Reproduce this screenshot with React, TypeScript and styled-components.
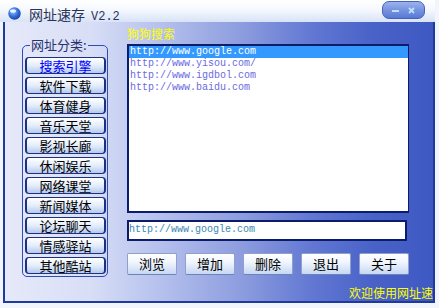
import React from 'react';
import styled, { createGlobalStyle } from 'styled-components';

const Global = createGlobalStyle`
  html, body { margin: 0; padding: 0; background: #f3f5fc; }
  body { width: 439px; height: 308px; overflow: hidden; font-family: "Noto Sans CJK SC", sans-serif; }
  * { box-sizing: border-box; }
`;

const Window = styled.div`
  width: 439px;
  height: 308px;
  display: flex;
  flex-direction: column;
  background: #f3f5fc;
`;

const TitleBar = styled.div`
  width: 435px;
  height: 22px;
  flex: none;
  display: flex;
  align-items: flex-start;
  padding-left: 8px;
  background: linear-gradient(180deg, #ffffff 0%, #f5f8fe 45%, #d8e3f6 100%);
`;

const Globe = styled.svg`
  margin-top: 7px;
  flex: none;
`;

const Title = styled.div`
  margin-top: 6px;
  margin-left: 8px;
  height: 16px;
  line-height: 16px;
  font-size: 14px;
  color: #2a3358;
  white-space: nowrap;
`;

const Version = styled.span`
  font-family: "Liberation Mono", monospace;
  font-size: 12px;
  margin-left: 6px;
`;

const WinButtons = styled.div`
  margin-left: auto;
  margin-right: 10px;
  margin-top: 1px;
  width: 43px;
  height: 18px;
  border: 1px solid #4362bd;
  border-radius: 7px;
  background: linear-gradient(180deg, #9bb3ec 0%, #7b96e0 45%, #5a78d4 100%);
  display: flex;
  align-items: center;
  justify-content: space-around;
  padding: 0 4px;
`;

const Body = styled.div`
  width: 432px;
  height: 281px;
  margin-left: 3px;
  flex: none;
  border-left: 2px solid #1d3a9c;
  border-right: 2px solid #1d3a9c;
  border-bottom: 2px solid #1d3a9c;
  background: linear-gradient(90deg, #e6e9f9 0%, #d8def6 20%, #b6c1ed 36%, #8b9bde 56%, #6177d2 72%, #4862c8 86%, #3f59c3 100%);
  display: flex;
  overflow: hidden;
  padding-left: 17px;
`;

const Group = styled.fieldset`
  margin: 14px 0 0 0;
  width: 86px;
  height: 241px;
  padding: 3px 1px 2px 2px;
  border: 1px solid #2c4cb8;
  border-radius: 5px;
  min-inline-size: 0;
  display: flex;
  flex-direction: column;
  gap: 3px;
  flex: none;
`;

const Legend = styled.legend`
  margin-left: 5px;
  padding: 0 1px;
  font-size: 13px;
  line-height: 18px;
  color: #26316e;
`;

const CatButton = styled.button<{ $active?: boolean }>`
  width: 81px;
  height: 17px;
  flex: none;
  padding: 0;
  border: 1px solid #1c3280;
  border-left-width: 2px;
  border-right-width: 2px;
  border-radius: 4px;
  background: linear-gradient(180deg, #ffffff 0%, #e4edfa 50%, #b6caee 100%);
  font-family: "Noto Sans CJK SC", sans-serif;
  font-size: 13px;
  line-height: 14px;
  color: ${p => (p.$active ? '#0000ff' : '#000000')};
  box-shadow: inset 0 1px 0 #ffffff;
`;

const Right = styled.div`
  margin-left: 19px;
  width: 282px;
  flex: none;
  padding-top: 5px;
  display: flex;
  flex-direction: column;
`;

const Caption = styled.div`
  height: 14px;
  line-height: 14px;
  font-size: 12px;
  color: #ffff00;
`;

const ListBox = styled.div`
  margin-top: 3px;
  width: 282px;
  height: 169px;
  background: #ffffff;
  border-style: solid;
  border-color: #0b1d6a;
  border-width: 2px 1px 2px 2px;
  display: flex;
  flex-direction: column;
`;

const Row = styled.div<{ $selected?: boolean }>`
  height: 12px;
  line-height: 12px;
  padding-left: 1px;
  font-family: "Liberation Mono", monospace;
  font-size: 10px;
  white-space: nowrap;
  background: ${p => (p.$selected ? '#3399ff' : 'transparent')};
  color: ${p => (p.$selected ? '#ffffff' : '#6a6ae2')};
`;

const UrlField = styled.div`
  margin-top: 7px;
  width: 280px;
  height: 21px;
  background: #ffffff;
  border: 2px solid #0b1d6a;
  padding: 0 0 2px 0;
  display: flex;
  align-items: center;
  font-family: "Liberation Mono", monospace;
  font-size: 10px;
  color: #3a88b0;
  white-space: nowrap;
`;

const ActionRow = styled.div`
  margin-top: 12px;
  display: flex;
  justify-content: space-between;
`;

const ActionButton = styled.button`
  width: 50px;
  height: 22px;
  padding: 0;
  border: 1px solid #8ea0cb;
  border-bottom-color: #6d82b8;
  border-radius: 2px;
  background: linear-gradient(180deg, #ffffff 0%, #f1f6fd 40%, #c6d8f3 100%);
  font-family: "Noto Sans CJK SC", sans-serif;
  font-size: 13px;
  line-height: 16px;
  color: #000000;
`;

const Footer = styled.div`
  margin-top: 11px;
  padding-left: 222px;
  height: 14px;
  line-height: 14px;
  font-size: 12px;
  color: #ffff00;
  white-space: nowrap;
`;

const categories = ['搜索引擎', '软件下载', '体育健身', '音乐天堂', '影视长廊', '休闲娱乐', '网络课堂', '新闻媒体', '论坛聊天', '情感驿站', '其他酷站'];
const urls = ['http://www.google.com', 'http://www.yisou.com/', 'http://www.igdbol.com', 'http://www.baidu.com'];
const actions = ['浏览', '增加', '删除', '退出', '关于'];

export default function App() {
  return (
    <Window>
      <Global />
      <TitleBar>
        <Globe width="13" height="13" viewBox="0 0 13 13">
          <defs>
            <radialGradient id="g" cx="0.4" cy="0.35" r="0.7">
              <stop offset="0" stopColor="#8fc0ff" />
              <stop offset="0.6" stopColor="#2e6ad8" />
              <stop offset="1" stopColor="#163c9c" />
            </radialGradient>
          </defs>
          <circle cx="6.5" cy="6.5" r="6.2" fill="url(#g)" />
          <ellipse cx="5" cy="4" rx="3" ry="1.8" fill="#ffffff" opacity="0.85" />
        </Globe>
        <Title>
          网址速存<Version>V2.2</Version>
        </Title>
        <WinButtons>
          <svg width="7" height="7" viewBox="0 0 7 7">
            <rect x="0" y="3" width="7" height="2" fill="#b8e2ff" />
          </svg>
          <svg width="7" height="7" viewBox="0 0 7 7">
            <path d="M1 1 L6 6 M6 1 L1 6" stroke="#b8e2ff" strokeWidth="1.8" />
          </svg>
        </WinButtons>
      </TitleBar>
      <Body>
        <Group>
          <Legend>网址分类:</Legend>
          {categories.map((c, i) => (
            <CatButton key={c} $active={i === 0}>{c}</CatButton>
          ))}
        </Group>
        <Right>
          <Caption>狗狗搜索</Caption>
          <ListBox>
            {urls.map((u, i) => (
              <Row key={u} $selected={i === 0}>{u}</Row>
            ))}
          </ListBox>
          <UrlField>http://www.google.com</UrlField>
          <ActionRow>
            {actions.map(a => (
              <ActionButton key={a}>{a}</ActionButton>
            ))}
          </ActionRow>
          <Footer>欢迎使用网址速</Footer>
        </Right>
      </Body>
    </Window>
  );
}
